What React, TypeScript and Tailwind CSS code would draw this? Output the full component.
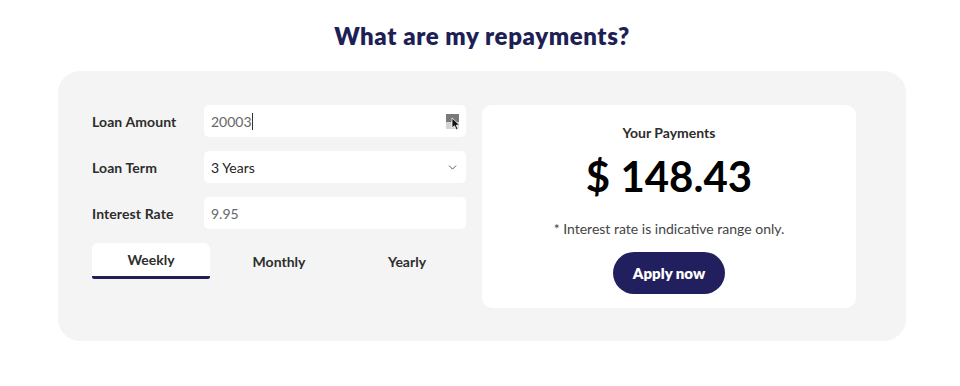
import { ChevronDown } from "lucide-react";

const font = { fontFamily: "Lato, 'Noto Sans', sans-serif" };

function Field({ label, children }: { label: string; children: React.ReactNode }) {
  return (
    <div className="flex items-center">
      <div className="w-[112px] text-[14px] font-bold text-[#2d2d2d] tracking-[0.1px]">{label}</div>
      <div className="flex-1 h-8 bg-white rounded-[5px] flex items-center px-[7px] text-[14px]">
        {children}
      </div>
    </div>
  );
}

export default function App() {
  return (
    <div className="w-[960px] h-[386px] bg-white" style={font}>
      <div className="w-[848px] ml-[58px]">
        <h1 className="pt-[18px] h-[71px] text-center text-[24px] font-extrabold text-[#201f55] tracking-[0.6px]">
          What are my repayments?
        </h1>
        <div className="bg-[#f4f4f4] rounded-[22px] pl-[34px] pr-[50px] pt-[34px] pb-[33px] flex gap-4">
          {/* Inputs */}
          <div className="w-[374px] flex flex-col gap-[14px]">
            <Field label="Loan Amount">
              <span className="text-[#666]">20003</span>
              <span className="w-px h-[17px] bg-[#333]" />
              <span className="ml-auto relative w-[13px] h-[15px] bg-[#d4d4d4]">
                <span className="absolute left-0 top-0 w-[13px] h-[8px] bg-[#7a7a7a]" />
                <svg className="absolute left-[5px] top-[3px]" width="10" height="14" viewBox="0 0 10 14">
                  <path d="M1 1 L1 11 L3.5 8.8 L5.3 12.8 L7 12 L5.3 8.2 L8.6 8 Z" fill="#111" stroke="#fff" strokeWidth="0.8" />
                </svg>
              </span>
            </Field>
            <Field label="Loan Term">
              <span className="text-[#222]">3 Years</span>
              <ChevronDown className="ml-auto text-[#444]" size={13} strokeWidth={1.6} />
            </Field>
            <Field label="Interest Rate">
              <span className="text-[#666]">9.95</span>
            </Field>
            <div className="grid grid-cols-3 gap-[10px] text-[14px] font-bold text-[#2d2d2d]">
              <div className="h-9 bg-white rounded-t-[6px] border-b-[3px] border-[#201f55] rounded-b-[2px] flex items-center justify-center">
                Weekly
              </div>
              <div className="h-9 flex items-center justify-center">Monthly</div>
              <div className="h-9 flex items-center justify-center">Yearly</div>
            </div>
          </div>
          {/* Result */}
          <div className="w-[374px] h-[203px] bg-white rounded-[10px] flex flex-col items-center pt-[17px]">
            <div className="text-[14px] font-bold text-[#2d2d2d]">Your Payments</div>
            <div className="mt-[8px] text-[42px] leading-[50px] font-bold text-black">$ 148.43</div>
            <div className="mt-[17px] text-[14px] text-[#444]">* Interest rate is indicative range only.</div>
            <button className="mt-[13px] w-[112px] h-[42px] rounded-full bg-[#221f5e] text-white text-[15px] font-extrabold">
              Apply now
            </button>
          </div>
        </div>
      </div>
    </div>
  );
}
